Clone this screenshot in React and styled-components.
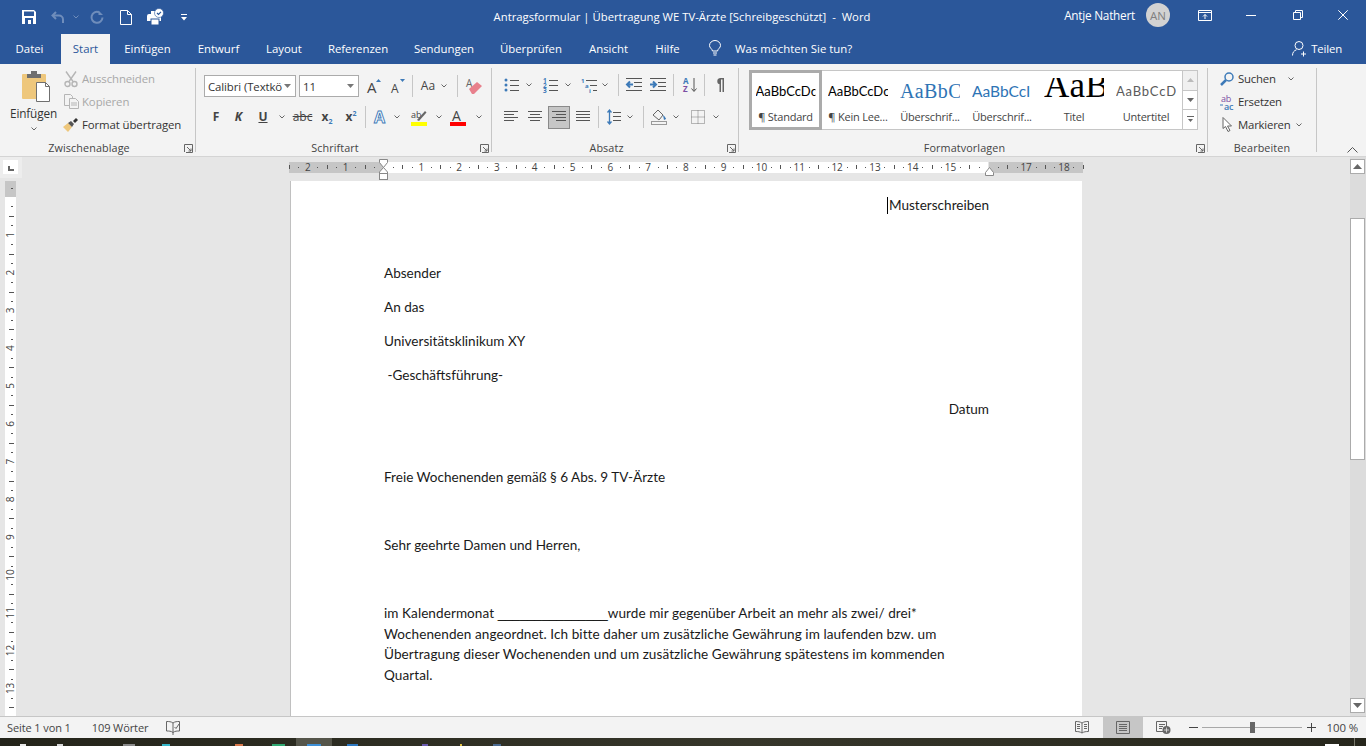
import React from "react";
import styled, { createGlobalStyle } from "styled-components";

const UI = `"Open Sans", "Noto Sans", sans-serif`;
const GRAY = "#444";
const DIM = "#b5b5b5";
const BLUE = "#3d7ab8";

const Global = createGlobalStyle`
  html, body { margin: 0; padding: 0; height: 100%; overflow: hidden; background: #e6e6e6; }
  * { box-sizing: border-box; }
  svg { overflow: visible; }
  text { font-family: ${UI}; }
`;

const Shell = styled.div`
  display: flex; flex-direction: column; width: 1366px; height: 746px; overflow: hidden;
  font-family: ${UI}; color: #333;
`;
const TitleBar = styled.header`
  display: grid; grid-template-columns: 1fr auto 1fr; align-items: center;
  height: 34px; background: #2b579a; color: #fff;
`;
const Qat = styled.div`display: flex; align-items: center; padding-left: 22px;`;
const QatItem = styled.span`display: inline-flex; margin-left: ${p => p.$ml || 0}px;`;
const WindowTitle = styled.div`
  font-size: 11.3px; letter-spacing: 0; white-space: pre; color: #fff; padding-bottom: 2px; margin-right: 2px;
`;
const WindowRight = styled.div`display: flex; align-items: center; justify-content: flex-end; align-self: start; height: 30px;`;
const UserName = styled.span`font-size: 11.8px; letter-spacing: -.25px; color: #fff;`;
const Avatar = styled.span`
  display: flex; align-items: center; justify-content: center; width: 24px; height: 24px; margin: 0 28px 0 11px;
  border-radius: 50%; background: #d2d2d2; color: #808080; font-size: 11.5px;
`;
const WinBtn = styled.span`display: inline-flex; justify-content: center; width: ${p => p.$w}px; margin-left: ${p => p.$ml || 0}px;`;

const TabBar = styled.nav`display: flex; align-items: stretch; height: 30px; background: #2b579a;`;
const Tab = styled.div`
  display: flex; align-items: center; justify-content: center; width: ${p => p.$w}px; margin-left: ${p => p.$ml || 0}px;
  padding-bottom: 1px; font-size: 11.4px; letter-spacing: -.02px; color: ${p => (p.$active ? "#2b579a" : "#fff")};
  background: ${p => (p.$active ? "#f3f3f3" : "transparent")};
`;
const TellMe = styled.div`
  display: flex; align-items: center; gap: 13px; margin-left: 16px; padding-bottom: 2px; font-size: 11.4px; letter-spacing: .02px; color: #fff;
`;
const Share = styled.div`
  display: flex; align-items: center; gap: 4px; margin-left: auto; padding: 0 24px 1px 0; font-size: 11.4px; letter-spacing: -.18px; color: #fff;
`;

const Ribbon = styled.section`
  display: flex; height: 93px; padding: 4px 0; background: #f3f3f3; border-bottom: 1px solid #d4d4d4;
`;
const Group = styled.div`
  display: flex; flex-direction: column; width: ${p => p.$w}px; border-right: 1px solid #c6c6c6;
`;
const GroupBody = styled.div`flex: 1; min-height: 0; padding-top: ${p => p.$pt || 0}px;`;
const GroupFoot = styled.div`
  display: grid; grid-template-columns: ${p => (p.$plain ? "1fr" : "1fr 17px")}; align-items: center; height: 16px; margin-bottom: -4px;
  font-size: 10.8px; letter-spacing: .1px; color: #444; line-height: 16px; text-align: center;
`;
const Launcher = styled.span`display: inline-flex; justify-self: end; margin-right: 2px;`;

const ClipLayout = styled.div`display: flex;`;
const Paste = styled.div`
  display: flex; flex-direction: column; align-items: center; width: 47px; margin-left: 10px; padding-top: 3px;
  font-size: 11.8px; letter-spacing: -.15px; color: #333;
`;
const PasteArt = styled.span`display: inline-flex; margin-left: 5px;`;
const PasteName = styled.span`margin: 3px 0 6px; line-height: 16px;`;
const SmallCol = styled.div`display: flex; flex-direction: column; margin: -1px 0 0 6px;`;
const SmallBtn = styled.div`
  display: flex; align-items: center; height: 23px; gap: 3px; font-size: 11.4px; letter-spacing: -.1px; white-space: nowrap;
  color: ${p => (p.$off ? "#a8a8a8" : "#333")};
`;
const IconSlot = styled.span`display: inline-flex; justify-content: center; flex: none; width: ${p => p.$w || 16}px;`;
const ToolRow = styled.div`display: flex; align-items: center; height: 22px; margin-top: ${p => p.$mt || 0}px;`;
const Tool = styled.span`
  display: inline-flex; align-items: center; justify-content: center; flex: none;
  width: ${p => p.$w}px; margin-left: ${p => p.$ml || 0}px;
`;
const Sep = styled.span`flex: none; width: 1px; height: 22px; background: #c6c6c6; margin-left: ${p => p.$ml}px;`;
const ActiveTool = styled(Tool)`height: 23px; background: #c6c6c6; border: 1px solid #8a8a8a;`;
const Combo = styled.div`
  display: flex; align-items: center; justify-content: space-between; flex: none; width: ${p => p.$w}px; height: 22px;
  margin-left: ${p => p.$ml}px; padding: 0 4px 0 3px; background: #fff; border: 1px solid #ababab;
  font-size: 11.4px; letter-spacing: -.1px; color: #333; white-space: nowrap;
`;
const Letter = styled.span`
  font-size: 12px; line-height: 14px; color: ${GRAY}; font-weight: ${p => (p.$bold ? 700 : 400)};
  font-style: ${p => (p.$italic ? "italic" : "normal")};
  text-decoration: ${p => p.$deco || "none"};
  sub, sup { font-size: 7px; color: ${BLUE}; line-height: 0; }
`;

const Gallery = styled.div`
  display: flex; width: 449px; height: 60px; margin: 2px 0 0 10px; background: #fff; border: 1px solid #c6c6c6;
`;
const StyleItems = styled.div`display: flex; flex: 1;`;
const StyleItem = styled.div`
  display: flex; flex-direction: column; align-items: center; width: 72px; padding: 3px 4px 0;
  ${p => p.$active && "outline: 3px solid #ababab; outline-offset: -3px; border: 1px solid #8a8a8a; margin: -1px 0 -1px -1px; height: 60px; width: 73px; padding-top: 3px;"}
`;
const Preview = styled.div`
  width: 60px; height: 34px; overflow: hidden; white-space: nowrap; flex: none;
  color: ${p => p.$c || "#000"}; font-family: ${p => p.$f || `Lato, sans-serif`}; font-size: ${p => p.$s || 13}px;
  letter-spacing: ${p => p.$ls || 0}px; line-height: ${p => p.$lh || 34}px;
  clip-path: inset(${p => p.$clip || 0}px 0 0 0);
`;
const StyleName = styled.div`font-size: 11px; letter-spacing: -.22px; color: #444; white-space: nowrap; margin-top: 1px;`;
const GalleryScroll = styled.div`display: flex; flex-direction: column; width: 15px; border-left: 1px solid #c6c6c6; background: #fff;`;
const GalleryBtn = styled.span`
  display: flex; align-items: center; justify-content: center; flex: 1; border-bottom: 1px solid #c6c6c6;
  background: ${p => (p.$off ? "#f0f0f0" : "#fff")};
  &:last-child { border-bottom: 0; }
`;
const EditCol = styled.div`display: flex; flex-direction: column; margin: -1px 0 0 12px;`;
const EditBtn = styled.div`
  display: flex; align-items: center; height: 23px; gap: 4px; font-size: 11.4px; letter-spacing: -.22px; color: #333; white-space: nowrap;
`;
const EditChev = styled.span`display: inline-flex; margin-left: ${p => p.$ml}px;`;
const Collapse = styled.span`display: inline-flex; align-self: flex-end; margin: 0 0 -1px 30px;`;

const Workspace = styled.main`display: flex; flex: 1; min-height: 0; background: #e6e6e6;`;
const DocGrid = styled.div`
  display: grid; flex: 1; min-width: 0; grid-template-columns: 22px 1fr; grid-template-rows: 24px 1fr;
`;
const Corner = styled.div`background: #ededed; padding: 3px 0 0 3px; height: 21px; width: 22px;`;
const CornerBtn = styled.div`
  display: flex; align-items: flex-end; width: 15px; height: 14px; padding: 0 0 3px 5px; background: #fff;
`;
const CornerL = styled.span`display: block; width: 6px; height: 5px; border-left: 2px solid #666; border-bottom: 2px solid #666;`;
const HRulerCell = styled.div`padding-left: 267px;`;
const VRulerCell = styled.div`overflow: hidden; padding-left: 5px;`;
const PageArea = styled.div`overflow: hidden; padding-left: 268px;`;
const Page = styled.article`
  width: 792px; height: 100%; padding: 14px 93px 0 93px; background: #fff; border-left: 1px solid #c0c0c0;
  font-family: Lato, sans-serif; font-size: 13.55px; color: #1a1a1a;
`;
const Para = styled.p`
  margin: 0 0 13.5px; line-height: 20.5px; white-space: nowrap; text-align: ${p => (p.$right ? "right" : "left")};
  letter-spacing: ${p => p.$ls || 0}px;
`;
const Caret = styled.span`display: inline-block; width: 1px; height: 17px; margin-right: 1px; background: #000; vertical-align: -4px;`;
const Blank = styled.span`font-family: "Liberation Sans", sans-serif; line-height: 1; letter-spacing: -.2px; color: #000;`;

const Scrollbar = styled.aside`
  display: flex; flex-direction: column; width: 16px; padding: 2px 1px 3px 0; background: #dcdcdc;
`;
const ScrollBtn = styled.div`
  display: flex; align-items: center; justify-content: center; height: 15px; background: #fff; border: 1px solid #ababab;
`;
const Thumb = styled.div`height: 242px; margin-top: 44px; background: #fff; border: 1px solid #ababab;`;
const Spacer = styled.div`flex: 1;`;

const StatusBar = styled.footer`
  display: flex; align-items: center; height: 22px; background: #f3f3f3; border-top: 1px solid #c6c6c6;
  font-size: 11px; color: #444; letter-spacing: -.1px;
`;
const StatusText = styled.span`display: inline-flex; margin-left: ${p => p.$ml}px; white-space: nowrap;`;
const StatusRight = styled.div`display: flex; align-items: center; height: 100%; margin-left: auto;`;
const ViewBtn = styled.span`
  display: flex; align-items: center; justify-content: center; height: 100%; width: ${p => p.$w}px;
  background: ${p => (p.$active ? "#c6c6c6" : "transparent")};
`;
const ZoomSign = styled.span`display: inline-flex; margin-left: ${p => p.$ml}px;`;
const Track = styled.div`position: relative; width: 100px; height: 1px; margin-left: 4px; background: #a8a8a8;`;
const TrackThumb = styled.span`position: absolute; left: 48px; top: -5px; width: 5px; height: 11px; background: #666;`;
const ZoomValue = styled.span`margin: 0 8px 0 11px; font-size: 11.4px;`;

const Taskbar = styled.div`
  display: flex; align-items: flex-end; height: 8px; background: linear-gradient(90deg, #24241a, #36362a 55%, #2e2e22 80%, #26261c);
`;
const TaskIcon = styled.span`
  flex: none; width: ${p => p.$w}px; height: ${p => p.$h || 2}px; margin-left: ${p => p.$ml}px; background: ${p => p.$c};
`;
const TaskActive = styled.span`
  display: flex; align-items: flex-end; justify-content: center; flex: none; width: 36px; height: 8px; margin-left: ${p => p.$ml}px; background: #55554a;
`;
const TaskLine = styled.span`flex: none; width: 1px; height: 8px; margin-left: ${p => p.$ml}px; background: #77776a;`;

/* Small drawings */
const Chev = ({ c = "#666" }) => (
  <svg width="6" height="4" viewBox="0 0 6 4"><path d="M.5.5 3 3 5.5.5" fill="none" stroke={c} /></svg>
);
const Launch = () => (
  <svg width="9" height="9" viewBox="0 0 9 9" fill="none" stroke="#666">
    <path d="M.5 8V.5H8.5V8.5H2" /><path d="M3 3l4 4M7 4.5V7H4.5" />
  </svg>
);
const Lines = ({ rows, c = "#555", w = 14 }) => (
  <svg width={w} height="14" viewBox={`0 0 ${w} 14`} stroke={c}>
    {rows.map((r, i) => <path key={i} d={`M${r[0]} ${r[2]}.5H${r[1]}`} />)}
  </svg>
);
const Down = () => <svg width="7" height="4" viewBox="0 0 7 4"><path d="M0 0h7L3.5 4z" fill="#777" /></svg>;

const SaveIcon = () => (
  <svg width="14" height="14" viewBox="0 0 14 14">
    <path d="M0 0h12l2 2v12H0z" fill="#fff" />
    <rect x="2" y="1.5" width="10" height="4.5" fill="#2b579a" />
    <rect x="3" y="8" width="8" height="6" fill="#2b579a" />
    <rect x="6" y="10" width="3" height="4" fill="#fff" />
  </svg>
);
const UndoIcon = () => (
  <svg width="14" height="13" viewBox="0 0 14 13" fill="none" stroke="#6f8dbb" strokeWidth="2">
    <path d="M5 1 1.5 4.5 5 8" /><path d="M2 4.5h6a4 4 0 0 1 4 4V12" />
  </svg>
);
const RedoIcon = () => (
  <svg width="14" height="14" viewBox="0 0 14 14" fill="none" stroke="#6f8dbb" strokeWidth="2">
    <path d="M9 2.2A5.5 5.5 0 1 0 12.5 7.5" />
    <path d="M8.500 .5v4.500h4.500z" fill="#6f8dbb" stroke="none" />
  </svg>
);
const NewIcon = () => (
  <svg width="12" height="15" viewBox="0 0 12 15" fill="none" stroke="#fff"><path d="M.5.5h7l4 4v10H.5z" /><path d="M7.5.5v4h4" /></svg>
);
const PrintIcon = () => (
  <svg width="17" height="16" viewBox="0 0 17 16">
    <path d="M0 7a2 2 0 0 1 2-2h2V2h5v3h5v7H0z" fill="#fff" />
    <rect x="4" y="10" width="8" height="6" fill="#fff" stroke="#2b579a" />
    <circle cx="12" cy="4" r="4.500" fill="#fff" stroke="#2b579a" strokeWidth=".6" />
    <path d="M10 4l1.500 1.500L14 2.800" fill="none" stroke="#2b579a" strokeWidth="1.200" />
  </svg>
);
const QatMore = () => (
  <svg width="6" height="7" viewBox="0 0 6 7"><path d="M0 .5h6" stroke="#fff" /><path d="M0 3h6L3 6.500z" fill="#fff" /></svg>
);
const GalleryMore = () => (
  <svg width="7" height="7" viewBox="0 0 7 7"><path d="M0 .5h7" stroke="#666" /><path d="M1 3h5L3.500 6z" fill="#666" /></svg>
);
const DisplayIcon = () => (
  <svg width="14" height="11" viewBox="0 0 14 11" fill="none" stroke="#fff">
    <path d="M.5.5h13v10H.5zM.5 2.500h13" /><path d="M7 9V4.500M5 6.500 7 4.500l2 2" />
  </svg>
);
const MinIcon = () => <svg width="10" height="1" viewBox="0 0 10 1"><path d="M0 .5h10" stroke="#fff" /></svg>;
const RestoreIcon = () => (
  <svg width="10" height="10" viewBox="0 0 10 10" fill="none" stroke="#fff"><path d="M.5 2.500h7v7h-7zM2.500 2.500v-2h7v7h-2" /></svg>
);
const CloseIcon = () => (
  <svg width="10" height="10" viewBox="0 0 10 10" stroke="#fff"><path d="M.3.3l9.400 9.400M9.700.3.3 9.700" /></svg>
);
const Bulb = () => (
  <svg width="14" height="16" viewBox="0 0 14 16" fill="none" stroke="#fff">
    <path d="M4.500 11C4 8.500 1.500 8 1.500 5.500a5.500 5 0 0 1 11 0C12.500 8 10 8.500 9.500 11zM5 13h4M5.500 15h3" />
  </svg>
);
const Person = () => (
  <svg width="15" height="15" viewBox="0 0 15 15" fill="none" stroke="#fff">
    <circle cx="7" cy="4.500" r="4" /><path d="M.5 14.500c0-3 1.500-5 4-5.700M9 13h5M11.500 10.500v5" />
  </svg>
);
const PasteIcon = () => (
  <svg width="29" height="31" viewBox="0 0 29 31">
    <rect x="0" y="3" width="24" height="25" rx="1" fill="#eec77c" />
    <path d="M5 3h14v4H5z" fill="#6f6f6f" /><rect x="9" y="0" width="6" height="4" fill="#6f6f6f" />
    <path d="M14.500 11.500h9l4 4v15h-13z" fill="#fff" stroke="#6f6f6f" /><path d="M23.500 11.500v4h4" fill="none" stroke="#6f6f6f" />
  </svg>
);
const CutIcon = () => (
  <svg width="14" height="16" viewBox="0 0 14 16" fill="none" stroke={DIM} strokeWidth="1.400">
    <path d="M2 .5l7 10M12 .5l-7 10" /><circle cx="3.500" cy="13" r="2.500" /><circle cx="10.500" cy="13" r="2.500" />
  </svg>
);
const CopyIcon = () => (
  <svg width="15" height="15" viewBox="0 0 15 15" fill="#f3f3f3" stroke={DIM}>
    <path d="M.5.500h6l2 2v9h-8z" /><path d="M5.500 4.500h6l3 3v7h-9z" /><path d="M7 9h6M7 11h6" />
  </svg>
);
const BrushIcon = () => (
  <svg width="16" height="14" viewBox="0 0 16 14">
    <path d="M0 9l5-4 4 4-4 5z" fill="#eec77c" /><path d="M5 5l3-2 3 3-2 3z" fill="#555" /><path d="M10 3l3-3 2 2-3 3z" fill="#333" />
  </svg>
);
const BigA = ({ s = 15, up = true }) => (
  <svg width="15" height="16" viewBox="0 0 15 16">
    <text x="0" y="15" fontSize={s} fill={GRAY}>A</text>
    <path d={up ? "M9 4l2.500-3L14 4z" : "M9 1h5l-2.500 3z"} fill={BLUE} />
  </svg>
);
const EraserIcon = () => (
  <svg width="16" height="17" viewBox="0 0 16 17">
    <text x="0" y="9" fontSize="10" fill="#666">A</text>
    <path d="M3 11l8-7 5 4-8 8H6z" fill="#e8808c" />
  </svg>
);
const OutlineA = () => (
  <svg width="16" height="16" viewBox="0 0 16 16">
    <text x="1" y="14" fontSize="16" fontWeight="700" fill="#fff" stroke="#3d7ab8" strokeWidth=".9">A</text>
  </svg>
);
const HiliteIcon = () => (
  <svg width="16" height="17" viewBox="0 0 16 17">
    <text x="0" y="9" fontSize="9" fill="#444">ab</text>
    <path d="M6 11 14 2l1.500 1.500L8 12z" fill="#666" />
    <rect y="13" width="16" height="4" fill="#ffff00" />
  </svg>
);
const ColorA = () => (
  <svg width="16" height="17" viewBox="0 0 16 17">
    <text x="2" y="12" fontSize="14" fill="#444">A</text>
    <rect y="13" width="16" height="4" fill="#ff0000" />
  </svg>
);
const ListIcon = ({ kind }) => {
  const ys = [2, 7, 12];
  return (
    <svg width="15" height="15" viewBox="0 0 15 15">
      {ys.map((y, i) => (
        kind === "dot"
          ? <circle key={y} cx="2" cy={y} r="1.500" fill={BLUE} />
          : <text key={y} x="0" y={y + 2.500} fontSize="6.500" fontWeight="700" fill={BLUE}>{i + 1}</text>
      ))}
      {ys.map(y => <path key={y} d={`M6 ${y}.5H15`} stroke="#555" />)}
    </svg>
  );
};
const MultiIcon = () => (
  <svg width="16" height="15" viewBox="0 0 16 15">
    <text x="0" y="5" fontSize="6" fontWeight="700" fill={BLUE}>1</text>
    <text x="4" y="10" fontSize="6" fontWeight="700" fill={BLUE}>a</text>
    <text x="8" y="15" fontSize="6" fontWeight="700" fill={BLUE}>i</text>
    <path d="M5 2.500h11M9 7.500h7M12 12.500h4" stroke="#555" />
  </svg>
);
const IndentIcon = ({ rev }) => (
  <svg width="16" height="14" viewBox="0 0 16 14">
    <path d="M0 .5h16M8 4.500h8M8 8.500h8M0 12.500h16" stroke="#555" />
    <path d={rev ? "M7 6.500H1M4 3.500 1 6.500l3 3" : "M0 6.500h6M3 3.500l3 3-3 3"} fill="none" stroke={BLUE} strokeWidth="2" />
  </svg>
);
const SortIcon = () => (
  <svg width="14" height="16" viewBox="0 0 14 16">
    <text x="0" y="7" fontSize="8" fontWeight="700" fill={BLUE}>A</text>
    <text x="0" y="15" fontSize="8" fontWeight="700" fill="#7b4ea3">Z</text>
    <path d="M11 1v13M8.500 11.500 11 14.500l2.500-3" fill="none" stroke="#555" />
  </svg>
);
const Pilcrow = () => (
  <svg width="10" height="14" viewBox="0 0 10 14">
    <path d="M5 6.500a3.300 3.300 0 0 1 0-6.500h4v14H7.500V1.500H6V14H4.500V6.500z" fill="#666" />
  </svg>
);
const SpacingIcon = () => (
  <svg width="14" height="16" viewBox="0 0 14 16">
    <path d="M6 3.500h8M6 7.500h8M6 11.500h8" stroke="#555" />
    <path d="M2.500 1v14M.5 3.500 2.500 1l2 2.500M.5 12.500l2 2.500 2-2.500" fill="none" stroke={BLUE} strokeWidth="1.300" />
  </svg>
);
const ShadeIcon = () => (
  <svg width="16" height="16" viewBox="0 0 16 16">
    <path d="M2 6l5-5 5 5-4 5z" fill="#f3f3f3" stroke="#666" />
    <path d="M12 6c2 2 3 3 3 4l-2 1z" fill={BLUE} />
    <rect x=".5" y="12.500" width="15" height="3" fill="#f3f3f3" stroke="#999" />
  </svg>
);
const BordersIcon = () => (
  <svg width="14" height="14" viewBox="0 0 14 14" fill="none" stroke="#777" strokeDasharray="1 1">
    <path d="M.5.500h13v13H.5zM7 .5v13M.5 7h13" />
  </svg>
);
const SearchIcon = () => (
  <svg width="14" height="14" viewBox="0 0 14 14" fill="none" stroke={BLUE} strokeWidth="1.500">
    <circle cx="9" cy="5" r="4" /><path d="M6 8l-5 5" strokeWidth="2.500" />
  </svg>
);
const ReplaceIcon = () => (
  <svg width="15" height="16" viewBox="0 0 15 16">
    <text x="1" y="7.500" fontSize="9" fill="#7b4ea3">ab</text>
    <text x="4" y="15.500" fontSize="9" fontWeight="600" fill={BLUE}>ac</text>
    <path d="M0 11h3" stroke={BLUE} />
  </svg>
);
const CursorIcon = () => (
  <svg width="11" height="15" viewBox="0 0 11 15"><path d="M1 .5v11l2.500-2L6 14.500l2-1-2.500-4.500h4z" fill="#fff" stroke="#666" /></svg>
);
const ProofIcon = () => (
  <svg width="14" height="15" viewBox="0 0 14 15" fill="none" stroke="#666">
    <path d="M7 3C5 1.500 3 1.500.5 1.500V11C3 11 5 11 7 12.500 9 11 11 11 13.500 11V1.500C11 1.500 9 1.500 7 3zM7 3v12" />
    <path d="M8.500 7l1.500 1.500L13 4" />
  </svg>
);
const ReadIcon = () => (
  <svg width="14" height="13" viewBox="0 0 14 13" fill="none" stroke="#666">
    <path d="M7 2C5 .7 3 .5.5.5v10c2.500 0 4.500.2 6.500 1.500 2-1.300 4-1.500 6.500-1.500V.5C11 .5 9 .7 7 2zM7 2v10M2 3.500h3M2 5.500h3M2 7.500h3M9 3.500h3M9 5.500h3M9 7.500h3" />
  </svg>
);
const PrintView = () => (
  <svg width="14" height="13" viewBox="0 0 14 13" fill="none" stroke="#666">
    <path d="M.5.500h13v12H.5zM3 3.500h8M3 5.500h8M3 7.500h8M3 9.500h8" />
  </svg>
);
const WebView = () => (
  <svg width="15" height="13" viewBox="0 0 15 13">
    <path d="M.5.500h10v10H.5zM3 3.500h6M3 5.500h4M3 7.500h3" fill="none" stroke="#666" />
    <circle cx="10.500" cy="9" r="4" fill="#666" /><path d="M8 9h5M10.500 6.500v5" stroke="#f3f3f3" strokeWidth=".7" />
  </svg>
);
const Triangle = ({ up, w = 9, c = "#666" }) => {
  const h = Math.round(w / 1.8);
  return (
    <svg width={w} height={h} viewBox={`0 0 ${w} ${h}`}>
      <path d={up ? `M${w / 2} 0 ${w} ${h}H0z` : `M0 0h${w}L${w / 2} ${h}z`} fill={c} />
    </svg>
  );
};
const PlusMinus = ({ plus }) => (
  <svg width="9" height="9" viewBox="0 0 9 9" stroke="#444"><path d="M0 4.500h9" />{plus && <path d="M4.500 0v9" />}</svg>
);

const SCALE = 37.8;
const quarters = (a, b) => {
  const out = [];
  for (let q = a; q <= b; q++) out.push(q);
  return out;
};

const HRuler = () => {
  const o = 94.5;
  return (
    <svg width="794" height="24" viewBox="0 0 794 24" style={{ display: "block" }}>
      <rect x="0" y="5" width="794" height="11" fill="#c6c6c6" />
      <rect x={o} y="5" width="605" height="11" fill="#fff" />
      {quarters(-10, 74).map(q => {
        const x = o + (q / 4) * SCALE;
        if (q === 0 || q === 64) return null;
        if (q % 4 === 0) {
          return <text key={q} x={x} y="14" fontSize="10" fill="#444" textAnchor="middle">{Math.abs(q / 4)}</text>;
        }
        if (q % 2 === 0) return <path key={q} d={`M${Math.round(x)}.5 8v4`} stroke="#555" />;
        return <rect key={q} x={Math.round(x)} y="10" width="1" height="1" fill="#555" />;
      })}
      <path d="M90.500 2.500h8v3l-4 5-4-5zM90.500 16.500v-1.500l4-4.500 4 4.500v1.500z" fill="#fff" stroke="#888" />
      <rect x="90.500" y="16.500" width="8" height="6" fill="#fff" stroke="#888" />
      <path d="M696.500 18.500v-3l4-5 4 5v3z" fill="#fff" stroke="#888" />
    </svg>
  );
};

const VRuler = () => {
  const o = 16;
  return (
    <svg width="11" height="540" viewBox="0 0 11 540" style={{ display: "block" }}>
      <rect width="11" height="540" fill="#fff" />
      <rect width="11" height={o} fill="#c6c6c6" />
      {quarters(0, 56).map(q => {
        const y = o + (q / 4) * SCALE;
        if (q === 0) return null;
        if (q % 4 === 0) {
          return <text key={q} x="0" y="0" fontSize="10" fill="#444" textAnchor="middle" transform={`translate(9 ${y}) rotate(-90)`}>{q / 4}</text>;
        }
        if (q % 2 === 0) return <path key={q} d={`M4 ${Math.round(y)}.5h5`} stroke="#555" />;
        return <rect key={q} x="6" y={Math.round(y)} width="2" height="1" fill="#555" />;
      })}
      <rect x="6" y="7" width="2" height="1" fill="#555" />
    </svg>
  );
};

const tabs = [
  ["Datei", 59], ["Start", 49, true, 2], ["Einfügen", 75], ["Entwurf", 67], ["Layout", 64], ["Referenzen", 84],
  ["Sendungen", 88], ["Überprüfen", 86], ["Ansicht", 69], ["Hilfe", 49],
];

const stylesList = [
  { name: "¶ Standard", text: "AaBbCcDc", active: true },
  { name: "¶ Kein Lee...", text: "AaBbCcDc" },
  { name: "Überschrif...", text: "AaBbC", c: "#2e74b5", f: `"Liberation Serif", serif`, s: 20, ls: .4 },
  { name: "Überschrif...", text: "AaBbCcI", c: "#2e74b5", s: 15.5, ls: 0 },
  { name: "Titel", text: "AaB", f: `"Liberation Serif", serif`, s: 35, ls: .2, lh: 24, clip: 4 },
  { name: "Untertitel", text: "AaBbCcD", c: "#5a5a5a", s: 13, ls: .8 },
];

export default function App() {
  return (
    <Shell>
      <Global />
      <TitleBar>
        <Qat>
          <QatItem><SaveIcon /></QatItem>
          <QatItem $ml={15}><UndoIcon /></QatItem>
          <QatItem $ml={8}><Chev c="#6f8dbb" /></QatItem>
          <QatItem $ml={11}><RedoIcon /></QatItem>
          <QatItem $ml={16}><NewIcon /></QatItem>
          <QatItem $ml={15}><PrintIcon /></QatItem>
          <QatItem $ml={17}><QatMore /></QatItem>
        </Qat>
        <WindowTitle>Antragsformular | Übertragung WE TV-Ärzte [Schreibgeschützt]  -  Word</WindowTitle>
        <WindowRight>
          <UserName>Antje Nathert</UserName>
          <Avatar>AN</Avatar>
          <WinBtn $w={14}><DisplayIcon /></WinBtn>
          <WinBtn $w={50} $ml={14}><MinIcon /></WinBtn>
          <WinBtn $w={44}><RestoreIcon /></WinBtn>
          <WinBtn $w={46}><CloseIcon /></WinBtn>
        </WindowRight>
      </TitleBar>

      <TabBar>
        {tabs.map(([t, w, a, ml]) => <Tab key={t} $w={w} $active={a} $ml={ml}>{t}</Tab>)}
        <TellMe><Bulb />Was möchten Sie tun?</TellMe>
        <Share><Person />Teilen</Share>
      </TabBar>

      <Ribbon>
        <Group $w={196}>
          <GroupBody>
            <ClipLayout>
              <Paste>
                <PasteArt><PasteIcon /></PasteArt>
                <PasteName>Einfügen</PasteName>
                <Chev />
              </Paste>
              <SmallCol>
                <SmallBtn $off><IconSlot><CutIcon /></IconSlot>Ausschneiden</SmallBtn>
                <SmallBtn $off><IconSlot><CopyIcon /></IconSlot>Kopieren</SmallBtn>
                <SmallBtn><IconSlot><BrushIcon /></IconSlot>Format übertragen</SmallBtn>
              </SmallCol>
            </ClipLayout>
          </GroupBody>
          <GroupFoot><span>Zwischenablage</span><Launcher><Launch /></Launcher></GroupFoot>
        </Group>

        <Group $w={296}>
          <GroupBody $pt={7}>
            <ToolRow>
              <Combo $w={92} $ml={8}>Calibri (Textkö<Down /></Combo>
              <Combo $w={60} $ml={3}>11<Down /></Combo>
              <Tool $w={15} $ml={8}><BigA /></Tool>
              <Tool $w={15} $ml={9}><BigA s={12} up={false} /></Tool>
              <Sep $ml={6} />
              <Tool $w={16} $ml={7}><Letter>Aa</Letter></Tool>
              <Tool $w={6} $ml={5}><Chev /></Tool>
              <Sep $ml={10} />
              <Tool $w={16} $ml={8}><EraserIcon /></Tool>
            </ToolRow>
            <ToolRow $mt={9}>
              <Tool $w={8} $ml={16}><Letter $bold>F</Letter></Tool>
              <Tool $w={9} $ml={14}><Letter $bold $italic>K</Letter></Tool>
              <Tool $w={10} $ml={15}><Letter $bold $deco="underline">U</Letter></Tool>
              <Tool $w={6} $ml={11}><Chev /></Tool>
              <Tool $w={17} $ml={9}><Letter $deco="line-through">abc</Letter></Tool>
              <Tool $w={14} $ml={9}><Letter $bold>x<sub>2</sub></Letter></Tool>
              <Tool $w={14} $ml={10}><Letter $bold>x<sup>2</sup></Letter></Tool>
              <Sep $ml={7} />
              <Tool $w={16} $ml={7}><OutlineA /></Tool>
              <Tool $w={6} $ml={5}><Chev /></Tool>
              <Tool $w={16} $ml={11}><HiliteIcon /></Tool>
              <Tool $w={6} $ml={9}><Chev /></Tool>
              <Tool $w={16} $ml={8}><ColorA /></Tool>
              <Tool $w={6} $ml={10}><Chev /></Tool>
            </ToolRow>
          </GroupBody>
          <GroupFoot><span>Schriftart</span><Launcher><Launch /></Launcher></GroupFoot>
        </Group>

        <Group $w={247}>
          <GroupBody $pt={6}>
            <ToolRow>
              <Tool $w={14} $ml={12}><ListIcon kind="dot" /></Tool>
              <Tool $w={6} $ml={8}><Chev /></Tool>
              <Tool $w={15} $ml={11}><ListIcon kind="num" /></Tool>
              <Tool $w={6} $ml={7}><Chev /></Tool>
              <Tool $w={16} $ml={10}><MultiIcon /></Tool>
              <Tool $w={6} $ml={5}><Chev /></Tool>
              <Sep $ml={10} />
              <Tool $w={16} $ml={7}><IndentIcon rev /></Tool>
              <Tool $w={16} $ml={8}><IndentIcon /></Tool>
              <Sep $ml={7} />
              <Tool $w={14} $ml={9}><SortIcon /></Tool>
              <Sep $ml={7} />
              <Tool $w={10} $ml={10}><Pilcrow /></Tool>
            </ToolRow>
            <ToolRow $mt={10}>
              <Tool $w={14} $ml={12}><Lines rows={[[0, 14, 1], [0, 10, 4], [0, 14, 7], [0, 10, 10]]} /></Tool>
              <Tool $w={14} $ml={10}><Lines rows={[[0, 14, 1], [2, 12, 4], [0, 14, 7], [2, 12, 10]]} /></Tool>
              <ActiveTool $w={22} $ml={6}><Lines rows={[[0, 14, 1], [4, 14, 4], [0, 14, 7], [4, 14, 10]]} /></ActiveTool>
              <Tool $w={14} $ml={6}><Lines rows={[[0, 14, 1], [0, 14, 4], [0, 14, 7], [0, 14, 10]]} /></Tool>
              <Sep $ml={8} />
              <Tool $w={14} $ml={8}><SpacingIcon /></Tool>
              <Tool $w={6} $ml={6}><Chev /></Tool>
              <Sep $ml={10} />
              <Tool $w={16} $ml={7}><ShadeIcon /></Tool>
              <Tool $w={6} $ml={6}><Chev /></Tool>
              <Tool $w={14} $ml={12}><BordersIcon /></Tool>
              <Tool $w={6} $ml={8}><Chev /></Tool>
            </ToolRow>
          </GroupBody>
          <GroupFoot><span>Absatz</span><Launcher><Launch /></Launcher></GroupFoot>
        </Group>

        <Group $w={469}>
          <GroupBody>
            <Gallery>
              <StyleItems>
                {stylesList.map((s, i) => (
                  <StyleItem key={i} $active={s.active}>
                    <Preview $c={s.c} $f={s.f} $s={s.s} $ls={s.ls} $lh={s.lh} $clip={s.clip}>{s.text}</Preview>
                    <StyleName>{s.name}</StyleName>
                  </StyleItem>
                ))}
              </StyleItems>
              <GalleryScroll>
                <GalleryBtn $off><Triangle up w={7} c="#bbb" /></GalleryBtn>
                <GalleryBtn><Triangle w={7} /></GalleryBtn>
                <GalleryBtn><GalleryMore /></GalleryBtn>
              </GalleryScroll>
            </Gallery>
          </GroupBody>
          <GroupFoot><span>Formatvorlagen</span><Launcher><Launch /></Launcher></GroupFoot>
        </Group>

        <Group $w={109}>
          <GroupBody>
            <EditCol>
              <EditBtn><IconSlot $w={14}><SearchIcon /></IconSlot>Suchen<EditChev $ml={8}><Chev /></EditChev></EditBtn>
              <EditBtn><IconSlot $w={14}><ReplaceIcon /></IconSlot>Ersetzen</EditBtn>
              <EditBtn><IconSlot $w={14}><CursorIcon /></IconSlot>Markieren<EditChev $ml={1}><Chev /></EditChev></EditBtn>
            </EditCol>
          </GroupBody>
          <GroupFoot $plain><span>Bearbeiten</span></GroupFoot>
        </Group>
        <Collapse>
          <svg width="11" height="6" viewBox="0 0 11 6"><path d="M.5 5.500l5-5 5 5" fill="none" stroke="#555" /></svg>
        </Collapse>
      </Ribbon>

      <Workspace>
        <DocGrid>
          <Corner><CornerBtn><CornerL /></CornerBtn></Corner>
          <HRulerCell><HRuler /></HRulerCell>
          <VRulerCell><VRuler /></VRulerCell>
          <PageArea>
            <Page>
              <Para $right><Caret />Musterschreiben</Para>
              <Para>&nbsp;</Para>
              <Para>Absender</Para>
              <Para>An das</Para>
              <Para>Universitätsklinikum XY</Para>
              <Para>&nbsp;-Geschäftsführung-</Para>
              <Para $right>Datum</Para>
              <Para>&nbsp;</Para>
              <Para>Freie Wochenenden gemäß § 6 Abs. 9 TV-Ärzte</Para>
              <Para>&nbsp;</Para>
              <Para>Sehr geehrte Damen und Herren,</Para>
              <Para>&nbsp;</Para>
              <Para $ls={0.07}>
                im Kalendermonat <Blank>_______________</Blank>wurde mir gegenüber Arbeit an mehr als zwei/ drei*<br />
                Wochenenden angeordnet. Ich bitte daher um zusätzliche Gewährung im laufenden bzw. um<br />
                Übertragung dieser Wochenenden und um zusätzliche Gewährung spätestens im kommenden<br />
                Quartal.
              </Para>
            </Page>
          </PageArea>
        </DocGrid>
        <Scrollbar>
          <ScrollBtn><Triangle up /></ScrollBtn>
          <Thumb />
          <Spacer />
          <ScrollBtn><Triangle /></ScrollBtn>
        </Scrollbar>
      </Workspace>

      <StatusBar>
        <StatusText $ml={7}>Seite 1 von 1</StatusText>
        <StatusText $ml={21}>109 Wörter</StatusText>
        <StatusText $ml={18}><ProofIcon /></StatusText>
        <StatusRight>
          <ViewBtn $w={41}><ReadIcon /></ViewBtn>
          <ViewBtn $w={40} $active><PrintView /></ViewBtn>
          <ViewBtn $w={41}><WebView /></ViewBtn>
          <ZoomSign $ml={5}><PlusMinus /></ZoomSign>
          <Track><TrackThumb /></Track>
          <ZoomSign $ml={5}><PlusMinus plus /></ZoomSign>
          <ZoomValue>100 %</ZoomValue>
        </StatusRight>
      </StatusBar>

      <Taskbar>
        <TaskIcon $w={6} $c="#e8e8e8" $ml={20} />
        <TaskIcon $w={6} $c="#d8d8d8" $ml={31} />
        <TaskIcon $w={12} $c="#8a8a8a" $ml={60} />
        <TaskIcon $w={8} $c="#35b6c8" $ml={27} />
        <TaskIcon $w={8} $c="#d8774a" $ml={65} />
        <TaskIcon $w={13} $c="#2fa871" $ml={29} />
        <TaskActive $ml={11}><TaskIcon $w={14} $c="#3d8fd6" $ml={0} /></TaskActive>
        <TaskIcon $w={11} $c="#2b77c0" $ml={15} />
        <TaskIcon $w={6} $c="#6a5bb0" $ml={64} />
        <TaskIcon $w={2} $c="#e0c040" $ml={32} />
        <TaskIcon $w={8} $c="#4a6a90" $ml={31} />
        <TaskIcon $w={14} $c="#fff" $ml={824} />
        <TaskLine $ml={15} />
      </Taskbar>
    </Shell>
  );
}
